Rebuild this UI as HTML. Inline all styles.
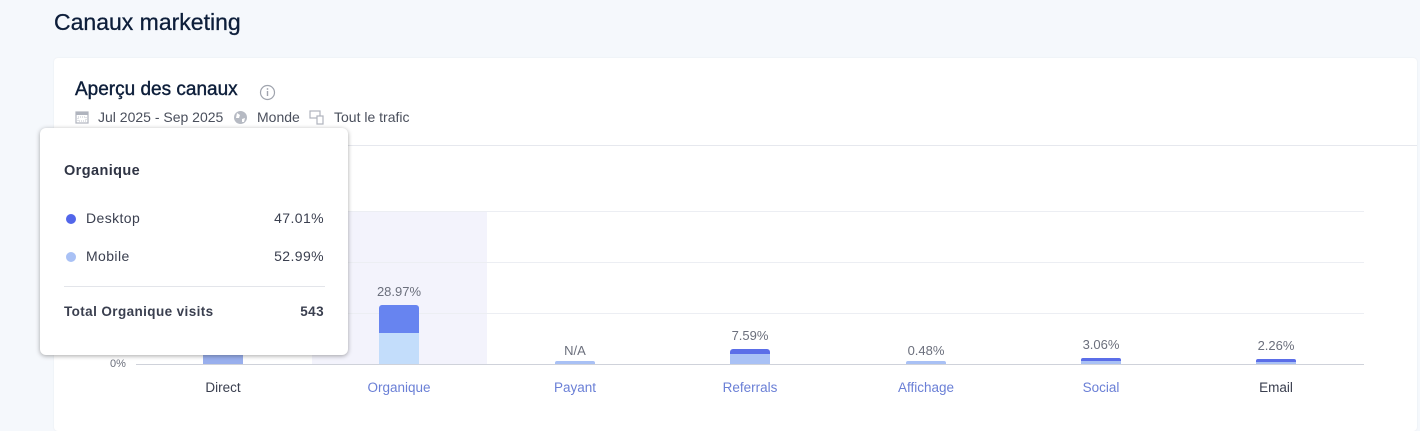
<!DOCTYPE html>
<html><head><meta charset="utf-8"><style>
*{margin:0;padding:0;box-sizing:border-box}
html,body{width:1420px;height:431px;overflow:hidden}
body{background:#f5f8fc;font-family:"Liberation Sans",sans-serif;position:relative}
.a{position:absolute}
.card{left:54px;top:58px;width:1363px;height:373px;background:#fff;border-radius:4px;box-shadow:0 0 2px rgba(0,0,0,.06)}
.lbl{font-size:13px;color:#6b6f7c;width:80px;text-align:center}
.xl{font-size:13.5px;width:120px;text-align:center;color:#6a7fd6}
.grid{left:136px;width:1228px;height:1px;background:#eceef3}
.tt{left:40px;top:128px;width:308px;height:227px;background:#fff;border-radius:6px;box-shadow:0 1px 5px rgba(0,0,0,.35);font-size:14px;color:#3a3f4f;letter-spacing:.4px}
</style></head><body>
<div class="a" style="left:54px;top:9px;font-size:23px;color:#0d1e3a;-webkit-text-stroke:.3px #0d1e3a">Canaux marketing</div>
<div class="a card"></div>
<div class="a" style="left:75px;top:79px;font-size:19px;color:#0d1e3a;-webkit-text-stroke:.4px #0d1e3a">Aperçu des canaux</div>
<svg class="a" style="left:259px;top:84px" width="17" height="17" viewBox="0 0 17 17"><circle cx="8.5" cy="8.5" r="7" fill="none" stroke="#a0a4ae" stroke-width="1.2"/><rect x="7.8" y="7" width="1.4" height="5" fill="#a0a4ae"/><circle cx="8.5" cy="5" r=".9" fill="#a0a4ae"/></svg>
<svg class="a" style="left:75px;top:110px" width="14" height="14" viewBox="0 0 14 14"><rect x="1" y="2" width="12" height="11" fill="none" stroke="#b0b4be" stroke-width="1.2"/><rect x="1" y="2" width="12" height="3" fill="#b0b4be"/><rect x="3" y="7" width="8" height="4" fill="none" stroke="#c0c4ce" stroke-dasharray="1 1"/></svg>
<div class="a" style="left:98px;top:109px;font-size:14px;color:#4a4f5c">Jul 2025 - Sep 2025</div>
<svg class="a" style="left:233px;top:110px" width="15" height="15" viewBox="0 0 15 15"><circle cx="7.5" cy="7.5" r="6.5" fill="#b6bac3"/><path d="M4 3 L7 5 L6 8 L3 8 Z M9 9 L12 8 L11 12 L9 12Z" fill="#fff"/></svg>
<div class="a" style="left:257px;top:109px;font-size:14px;color:#4a4f5c">Monde</div>
<svg class="a" style="left:309px;top:110px" width="16" height="15" viewBox="0 0 16 15"><rect x="1" y="1" width="10" height="7" fill="none" stroke="#b0b4be" stroke-width="1.2"/><rect x="8" y="6" width="6" height="8" fill="#fff" stroke="#b0b4be" stroke-width="1.2"/></svg>
<div class="a" style="left:334px;top:109px;font-size:14px;color:#4a4f5c">Tout le trafic</div>
<div class="a" style="left:54px;top:145px;width:1363px;height:1px;background:#e6e8ee"></div>

<div class="a" style="left:312px;top:211px;width:175px;height:153px;background:#f3f3fc"></div>
<div class="a grid" style="top:211px"></div>
<div class="a grid" style="top:262px"></div>
<div class="a grid" style="top:313px"></div>
<div class="a" style="left:136px;top:364px;width:1228px;height:1px;background:#cfd2da"></div>
<div class="a" style="left:110px;top:358px;font-size:11px;color:#6b6f7c">0%</div>

<div class="a" style="left:203px;top:352px;width:40px;height:12px;background:#99afed"></div>
<div class="a" style="left:379px;top:305px;width:40px;height:28px;background:#6784f0;border-radius:3px 3px 0 0"></div>
<div class="a" style="left:379px;top:333px;width:40px;height:31px;background:#c3ddfb"></div>
<div class="a" style="left:555px;top:361px;width:40px;height:3px;background:#a9c1f5;border-radius:2px 2px 0 0"></div>
<div class="a" style="left:730px;top:349px;width:40px;height:5px;background:#5b6ee8;border-radius:3px 3px 0 0"></div>
<div class="a" style="left:730px;top:354px;width:40px;height:10px;background:#a9c1f5"></div>
<div class="a" style="left:906px;top:361px;width:40px;height:3px;background:#a9c1f5;border-radius:2px 2px 0 0"></div>
<div class="a" style="left:1081px;top:358px;width:40px;height:3px;background:#5b6ee8;border-radius:2px 2px 0 0"></div>
<div class="a" style="left:1081px;top:361px;width:40px;height:3px;background:#a9c1f5"></div>
<div class="a" style="left:1256px;top:359px;width:40px;height:3px;background:#5b6ee8;border-radius:2px 2px 0 0"></div>
<div class="a" style="left:1256px;top:362px;width:40px;height:2px;background:#a9c1f5"></div>

<div class="a lbl" style="left:359px;top:284px">28.97%</div>
<div class="a lbl" style="left:535px;top:343px">N/A</div>
<div class="a lbl" style="left:710px;top:328px">7.59%</div>
<div class="a lbl" style="left:886px;top:343px">0.48%</div>
<div class="a lbl" style="left:1061px;top:337px">3.06%</div>
<div class="a lbl" style="left:1236px;top:338px">2.26%</div>

<div class="a xl" style="left:163px;top:380px;color:#3a3f4f">Direct</div>
<div class="a xl" style="left:339px;top:380px">Organique</div>
<div class="a xl" style="left:515px;top:380px">Payant</div>
<div class="a xl" style="left:690px;top:380px">Referrals</div>
<div class="a xl" style="left:866px;top:380px">Affichage</div>
<div class="a xl" style="left:1041px;top:380px">Social</div>
<div class="a xl" style="left:1216px;top:380px;color:#3a3f4f">Email</div>

<div class="a tt">
<div class="a" style="left:24px;top:35px;font-weight:bold;font-size:14.5px;color:#2f3444">Organique</div>
<div class="a" style="left:26px;top:86px;width:10px;height:10px;border-radius:50%;background:#5266ea"></div>
<div class="a" style="left:46px;top:82px">Desktop</div>
<div class="a" style="right:24px;top:82px">47.01%</div>
<div class="a" style="left:26px;top:124px;width:10px;height:10px;border-radius:50%;background:#a9c1f5"></div>
<div class="a" style="left:46px;top:120px">Mobile</div>
<div class="a" style="right:24px;top:120px">52.99%</div>
<div class="a" style="left:24px;top:158px;width:261px;height:1px;background:#e3e5ea"></div>
<div class="a" style="left:24px;top:176px;font-weight:bold;font-size:13.5px">Total Organique visits</div>
<div class="a" style="right:24px;top:176px;font-weight:bold;font-size:13.5px">543</div>
</div>
</body></html>
